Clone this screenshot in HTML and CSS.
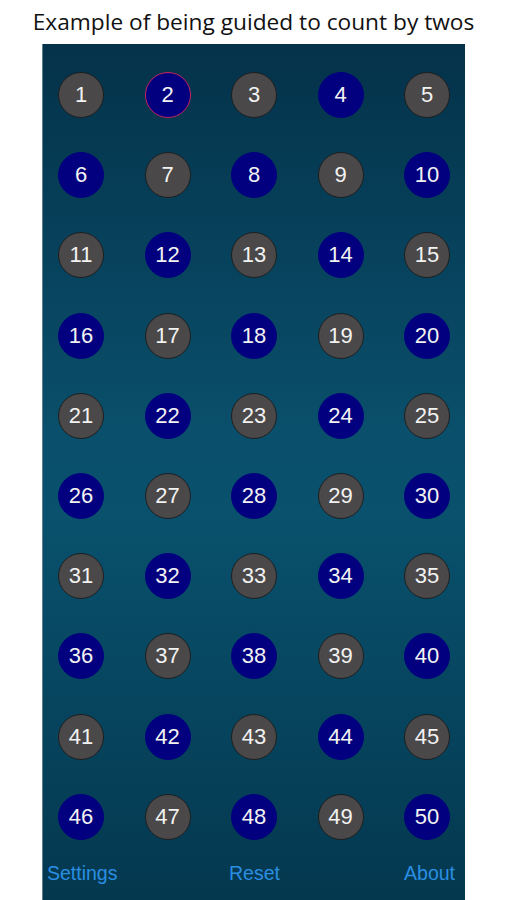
FILE: index.html
```html
<!DOCTYPE html>
<html lang="en">
<head>
    <meta charset="UTF-8">
    <meta name="viewport" content="width=device-width, initial-scale=1.0">
    <title>Count by twos</title>
    <link rel="stylesheet" href="styles.css">
</head>
<body>

    <h1 class="caption">Example of being guided to count by twos</h1>

    <div class="screen">
        <div class="board" id="board"></div>

        <div class="toolbar">
            <a class="tool settings" href="#">Settings</a>
            <a class="tool reset" href="#">Reset</a>
            <a class="tool about" href="#">About</a>
        </div>
    </div>

    <script>
        const board = document.getElementById("board");

        for (let n = 1; n <= 50; n++) {
            const ball = document.createElement("div");
            ball.className = "ball";
            if (n % 2 === 0) ball.classList.add("even");
            if (n === 2) ball.classList.add("current");
            ball.textContent = n;
            board.appendChild(ball);
        }
    </script>

</body>
</html>
```

FILE: styles.css
```css
body {
    margin: 0;
    background: #FFFFFF;
    font-family: "Liberation Sans", Arial, sans-serif;
}

.caption {
    margin: 0;
    height: 44px;
    line-height: 44px;
    text-align: center;
    font-family: "Open Sans", sans-serif;
    font-size: 22.7px;
    font-weight: normal;
    color: #111;
}

.screen {
    width: 423px;
    height: 856px;
    margin-left: 42px;
    box-sizing: border-box;
    border-left: 1px solid #5f7f90;
    background: linear-gradient(to bottom, #04324a 0%, #0a4f6b 45%, #09516d 55%, #04384f 100%);
    display: flex;
    flex-direction: column;
}

.board {
    display: grid;
    grid-template-columns: repeat(5, 46px);
    justify-content: space-between;
    row-gap: 34.2px;
    padding: 28px 15px 0 15px;
}

.ball {
    width: 46px;
    height: 46px;
    box-sizing: border-box;
    border-radius: 50%;
    border: 1px solid #1e1e1e;
    background: #4a4848;
    color: #F2F2F2;
    font-size: 22px;
    display: flex;
    justify-content: center;
    align-items: center;
}

.ball.even {
    background: #02007e;
    border-color: #02007e;
}

.ball.current {
    border: 1.5px solid #c8245e;
}

.toolbar {
    display: grid;
    grid-template-columns: 1fr auto 1fr;
    padding: 22px 10px 0 4px;
}

.tool {
    color: #2a8ee2;
    font-size: 19.5px;
    text-decoration: none;
}

.settings { justify-self: start; }
.reset { margin-left: 7px; }
.about { justify-self: end; }
```
